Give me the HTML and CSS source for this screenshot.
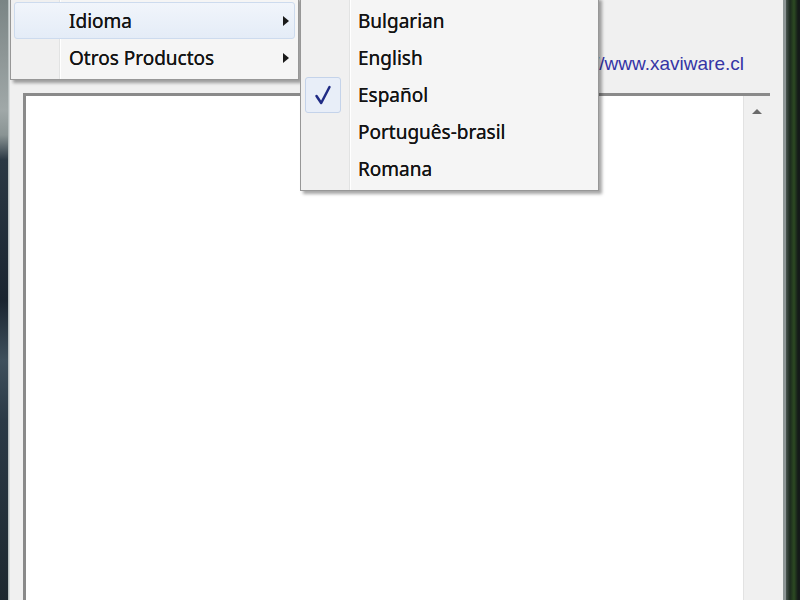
FILE: index.html
```html
<!DOCTYPE html>
<html lang="es">
<head>
  <meta charset="UTF-8" />
  <title>Idioma</title>
  <meta name="viewport" content="width=device-width, initial-scale=1" />
  <link rel="stylesheet" href="styles.css">
</head>
<body>
  <div class="desktop">
    <div class="edge-left"></div>

    <div class="window">
      <div class="header">
        <a class="link" href="#">http://www.xaviware.cl</a>
      </div>
      <div class="textbox">
        <div class="text-area"></div>
        <div class="scrollbar">
          <span class="arrow-up"></span>
        </div>
      </div>
    </div>

    <div class="edge-right"></div>

    <!-- menu principal -->
    <ul class="menu main-menu">
      <li class="item hover"><span class="label">Idioma</span><span class="sub-arrow"></span></li>
      <li class="item"><span class="label">Otros Productos</span><span class="sub-arrow"></span></li>
    </ul>

    <!-- submenu de idiomas -->
    <ul class="menu sub-menu">
      <li class="item"><span class="check"></span><span class="label">Bulgarian</span></li>
      <li class="item"><span class="check"></span><span class="label">English</span></li>
      <li class="item">
        <span class="check checked">
          <svg width="20" height="22" viewBox="0 0 20 22">
            <path d="M3.5 12 L8.2 19 L16.5 3" fill="none" stroke="#1f2b85" stroke-width="2.5" stroke-linecap="round" stroke-linejoin="round"/>
          </svg>
        </span>
        <span class="label">Español</span>
      </li>
      <li class="item"><span class="check"></span><span class="label">Português-brasil</span></li>
      <li class="item"><span class="check"></span><span class="label">Romana</span></li>
    </ul>
  </div>
</body>
</html>
```

FILE: styles.css
```css
body {
  margin: 0;
  background: #1c2630;
  font-family: "Noto Sans", sans-serif;
}
.desktop {
  position: relative;
  display: flex;
  width: 800px;
  height: 600px;
  overflow: hidden;
}
.edge-left {
  width: 8px;
  background: linear-gradient(to bottom, #7a8484 0, #a0a8a8 110px, #8a9494 135px, #2a3844 160px, #1a2530 300px, #3e505c 360px, #2a3a46 420px, #1e2830 600px);
  border-right: 1px solid #b8c0c0;
}
.edge-right {
  flex: 1;
  background: linear-gradient(to right, #4a5650 0, #1c2a1e 4px, #2c4a22 8px, #141a18 12px);
}
.window {
  width: 747px;
  background: #f0f0f0;
  border-left: 1px solid #d8dcdc;
  border-right: 3px solid #8e9696;
  padding: 0 13px;
  display: flex;
  flex-direction: column;
}
.header {
  height: 93px;
  display: flex;
  justify-content: flex-end;
  padding-right: 26px;
}
.link {
  margin-top: 53px;
  font-family: "Liberation Sans", Arial, sans-serif;
  font-size: 19px;
  line-height: 22px;
  height: 22px;
  color: #3535a6;
  text-decoration: none;
}
.textbox {
  flex: 1;
  display: flex;
  border-top: 3px solid #8a8a8a;
  border-left: 3px solid #8a8a8a;
  background: #fff;
}
.text-area {
  flex: 1;
}
.scrollbar {
  width: 26px;
  background: #f0f0f0;
  border-left: 1px solid #e2e2e2;
  display: flex;
  justify-content: center;
  padding-top: 13px;
}
.arrow-up {
  width: 0;
  height: 0;
  border-left: 5px solid transparent;
  border-right: 5px solid transparent;
  border-bottom: 5px solid #6a6a6a;
}

/* menus */
.menu {
  position: absolute;
  top: -3px;
  margin: 0;
  padding: 4px 0 3px;
  list-style: none;
  border: 1px solid #979797;
  background: linear-gradient(to right, #f0f0f0 0, #f0f0f0 48px, #e2e3e3 48px, #e2e3e3 49px, #ffffff 49px, #ffffff 50px, #f5f5f5 50px);
  box-shadow: 3px 3px 3px rgba(0, 0, 0, 0.35);
}
.main-menu {
  left: 10px;
  width: 287px;
}
.sub-menu {
  left: 300px;
  width: 297px;
}
.item {
  display: flex;
  align-items: center;
  height: 35px;
  margin: 0 3px;
  border: 1px solid transparent;
  border-radius: 3px;
  font-size: 19px;
  color: #141414;
  text-shadow: 0 0 0.4px #141414;
}
.main-menu .item {
  padding-left: 54px;
}
.item.hover {
  background: linear-gradient(to bottom, #f1f5fb, #e4ecf7);
  border-color: #cddbee;
}
.sub-arrow {
  margin-left: auto;
  margin-right: 5px;
  width: 0;
  height: 0;
  border-top: 5px solid transparent;
  border-bottom: 5px solid transparent;
  border-left: 6px solid #1a1a1a;
}
.check {
  width: 34px;
  height: 34px;
  margin-right: 17px;
  border: 1px solid transparent;
  border-radius: 3px;
  display: flex;
  align-items: center;
  justify-content: center;
}
.check.checked {
  background: #e8eef8;
  border-color: #c4d3ea;
}
```
